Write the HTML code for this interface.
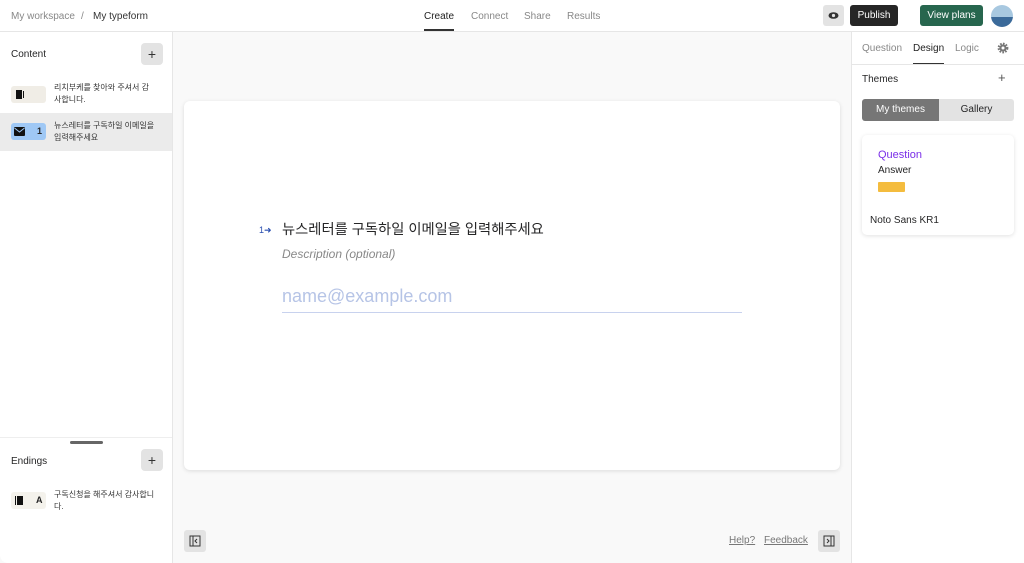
<!DOCTYPE html>
<html><head><meta charset="utf-8"><style>
*{box-sizing:border-box;margin:0;padding:0}
body{width:1024px;height:563px;overflow:hidden;background:#f9f9f9;font-family:"Liberation Sans","Noto Sans CJK KR",sans-serif;color:#262627;position:relative}
.a{position:absolute}
.top{left:0;top:0;width:1024px;height:32px;background:#fff;border-bottom:1px solid #e6e6e6}
.t{font-size:10px;white-space:nowrap;line-height:12px}
.left{left:0;top:32px;width:173px;height:531px;background:#fff;border-right:1px solid #e6e6e6;border-bottom-left-radius:8px}
.right{left:851px;top:32px;width:173px;height:531px;background:#fff;border-left:1px solid #e6e6e6}
.plus{width:22px;height:22px;background:#e3e3e3;border-radius:4px;text-align:center;line-height:22px;font-size:14px;color:#333}
.k{font-size:8px;line-height:12px;color:#333;width:104px;word-break:break-all}
</style></head><body>
<div class="a top">
 <div class="a t" style="left:11px;top:11px;color:#888">My workspace</div>
 <div class="a t" style="left:81px;top:11px;color:#888">/</div>
 <div class="a t" style="left:93px;top:11px;color:#333">My typeform</div>
 <div class="a t" style="left:424px;top:11px;color:#222">Create</div>
 <div class="a" style="left:424px;top:29px;width:30px;height:2px;background:#333"></div>
 <div class="a t" style="left:471px;top:11px;color:#888">Connect</div>
 <div class="a t" style="left:524px;top:11px;color:#888">Share</div>
 <div class="a t" style="left:567px;top:11px;color:#888">Results</div>
 <div class="a" style="left:823px;top:5px;width:21px;height:21px;background:#e3e3e3;border-radius:3px"><svg width="21" height="21"><ellipse cx="10.5" cy="10.5" rx="5" ry="3.3" fill="#333"/><circle cx="10.5" cy="10.5" r="1.6" fill="#e3e3e3"/></svg></div>
 <div class="a t" style="left:850px;top:5px;width:48px;height:21px;background:#262626;border-radius:3px;color:#fff;text-align:center;line-height:22px">Publish</div>
 <div class="a t" style="left:920px;top:5px;width:63px;height:21px;background:#27664e;border-radius:3px;color:#fff;text-align:center;line-height:22px">View plans</div>
 <div class="a" style="left:991px;top:5px;width:22px;height:22px;border-radius:50%;background:linear-gradient(#a8c8e0 55%,#3b6a9a 55%)"></div>
</div>
<div class="a left">
 <div class="a t" style="left:11px;top:17px;font-size:10px">Content</div>
 <div class="a plus" style="left:141px;top:11px">+</div>
 <div class="a" style="left:11px;top:54px;width:35px;height:17px;background:#f0ede6;border-radius:3px"><div class="a" style="left:5px;top:4px;width:6px;height:9px;background:#111"></div><div class="a" style="left:12px;top:5px;width:1px;height:7px;background:#111"></div></div>
 <div class="a k" style="left:54px;top:50px;width:100px">리치부케를 찾아와 주셔서 감사합니다.</div>
 <div class="a" style="left:0;top:81px;width:172px;height:38px;background:#ebebeb"></div>
 <div class="a" style="left:11px;top:91px;width:35px;height:17px;background:#9fc8f5;border-radius:3px"><svg class="a" style="left:3px;top:4px" width="11" height="9"><rect width="11" height="9" rx="1" fill="#111"/><path d="M0.5 1 L5.5 5 L10.5 1" stroke="#9fc8f5" fill="none"/></svg><div class="a" style="left:26px;top:3px;font-size:9px;font-weight:bold">1</div></div>
 <div class="a k" style="left:54px;top:88px;width:110px;word-break:keep-all">뉴스레터를 구독하일 이메일을 입력해주세요</div>
 <div class="a" style="left:0;top:405px;width:172px;height:1px;background:#eee"></div>
 <div class="a" style="left:70px;top:409px;width:33px;height:3px;background:#666;border-radius:2px"></div>
 <div class="a t" style="left:11px;top:424px">Endings</div>
 <div class="a plus" style="left:141px;top:417px">+</div>
 <div class="a" style="left:11px;top:460px;width:35px;height:17px;background:#f4f2ec;border-radius:3px"><div class="a" style="left:4px;top:4px;width:1px;height:9px;background:#111"></div><div class="a" style="left:6px;top:4px;width:6px;height:9px;background:#111"></div><div class="a" style="left:25px;top:3px;font-size:9px;font-weight:bold">A</div></div>
 <div class="a k" style="left:54px;top:457px">구독신청을 해주셔서 감사합니다.</div>
</div>
<div class="a" style="left:184px;top:101px;width:656px;height:369px;background:#fff;border-radius:6px;box-shadow:0 1px 4px rgba(0,0,0,.12)">
 <div class="a" style="left:75px;top:124px;font-size:9px;color:#2a4fb0">1➜</div>
 <div class="a" style="left:98px;top:119px;font-size:14.3px;line-height:20px;color:#262627;white-space:nowrap">뉴스레터를 구독하일 이메일을 입력해주세요</div>
 <div class="a" style="left:98px;top:146px;font-size:12px;line-height:15px;color:#888;font-style:italic">Description (optional)</div>
 <div class="a" style="left:98px;top:185px;font-size:18px;line-height:21px;color:#b6c4e6">name@example.com</div>
 <div class="a" style="left:98px;top:211px;width:460px;height:1px;background:#c8d2ee"></div>
</div>
<div class="a" style="left:184px;top:530px;width:22px;height:22px;background:#e3e3e3;border-radius:3px"><svg width="22" height="22"><rect x="6" y="6" width="10" height="10" fill="none" stroke="#333"/><line x1="9" y1="6" x2="9" y2="16" stroke="#333"/><path d="M13 9 L11 11 L13 13" stroke="#333" fill="none"/></svg></div>
<div class="a t" style="left:729px;top:535px;color:#777;text-decoration:underline">Help?</div>
<div class="a t" style="left:764px;top:535px;color:#777;text-decoration:underline">Feedback</div>
<div class="a" style="left:818px;top:530px;width:22px;height:22px;background:#e3e3e3;border-radius:3px"><svg width="22" height="22"><rect x="6" y="6" width="10" height="10" fill="none" stroke="#333"/><line x1="13" y1="6" x2="13" y2="16" stroke="#333"/><path d="M9 9 L11 11 L9 13" stroke="#333" fill="none"/></svg></div>
<div class="a right">
 <div class="a t" style="left:10px;top:11px;color:#888">Question</div>
 <div class="a t" style="left:61px;top:11px;color:#222">Design</div>
 <div class="a" style="left:61px;top:31px;width:31px;height:2px;background:#333"></div>
 <div class="a t" style="left:103px;top:11px;color:#888">Logic</div>
 <svg class="a" style="left:145px;top:10px" width="12" height="12" viewBox="0 0 12 12"><circle cx="6" cy="6" r="4.2" fill="none" stroke="#777" stroke-width="2.4" stroke-dasharray="1.6 1.2"/><circle cx="6" cy="6" r="3.6" fill="#777"/><circle cx="6" cy="6" r="1.5" fill="#fff"/></svg>
 <div class="a" style="left:0;top:32px;width:173px;height:1px;background:#e6e6e6"></div>
 <div class="a t" style="left:10px;top:42px">Themes</div>
 <div class="a t" style="left:146px;top:40px;color:#555;font-size:13px">+</div>
 <div class="a t" style="left:10px;top:67px;width:77px;height:22px;background:#767676;border-radius:3px 0 0 3px;color:#fff;text-align:center;line-height:22px">My themes</div>
 <div class="a t" style="left:87px;top:67px;width:75px;height:22px;background:#e3e3e3;border-radius:0 3px 3px 0;text-align:center;line-height:22px">Gallery</div>
 <div class="a" style="left:10px;top:103px;width:152px;height:100px;background:#fff;border-radius:5px;box-shadow:0 1px 4px rgba(0,0,0,.12)">
  <div class="a" style="left:16px;top:14px;font-size:11px;line-height:13px;color:#7a2ee8">Question</div>
  <div class="a t" style="left:16px;top:30px">Answer</div>
  <div class="a" style="left:16px;top:47px;width:27px;height:10px;background:#f4bc3e;border-radius:1px"></div>
  <div class="a t" style="left:8px;top:80px">Noto Sans KR1</div>
 </div>
</div>
</body></html>
